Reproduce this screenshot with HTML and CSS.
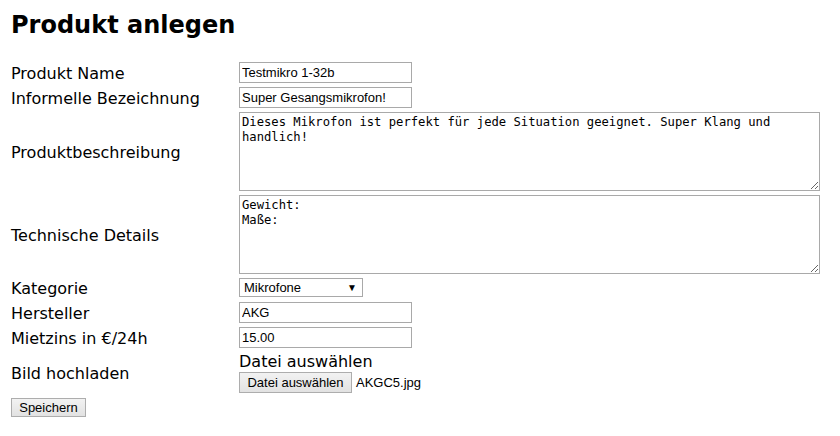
FILE: index.html
```html
<!DOCTYPE html>
<html lang="de">
<head>
<meta charset="utf-8">
<title>Produkt anlegen</title>
<link rel="stylesheet" href="styles.css">
</head>
<body>
<h1 class="title">Produkt anlegen</h1>
<form class="form">
  <div class="grid">
    <label class="lbl" for="name">Produkt Name</label>
    <div class="cell"><input id="name" class="txt" type="text" value="Testmikro 1-32b"></div>

    <label class="lbl" for="info">Informelle Bezeichnung</label>
    <div class="cell"><input id="info" class="txt" type="text" value="Super Gesangsmikrofon!"></div>

    <label class="lbl" for="desc">Produktbeschreibung</label>
    <div class="cell"><textarea id="desc" class="area">Dieses Mikrofon ist perfekt für jede Situation geeignet. Super Klang und handlich!</textarea></div>

    <label class="lbl" for="tech">Technische Details</label>
    <div class="cell"><textarea id="tech" class="area">Gewicht:
Maße:</textarea></div>

    <label class="lbl">Kategorie</label>
    <div class="cell"><div class="select"><span class="sel-text">Mikrofone</span><span class="sel-arrow">▼</span></div></div>

    <label class="lbl" for="herst">Hersteller</label>
    <div class="cell"><input id="herst" class="txt" type="text" value="AKG"></div>

    <label class="lbl" for="preis">Mietzins in €/24h</label>
    <div class="cell"><input id="preis" class="txt" type="text" value="15.00"></div>

    <label class="lbl">Bild hochladen</label>
    <div class="cell file">
      <div class="file-caption">Datei auswählen</div>
      <div class="file-row"><button type="button" class="btn btn-file">Datei auswählen</button><span class="file-name">AKGC5.jpg</span></div>
    </div>
  </div>
  <button type="button" class="btn btn-save">Speichern</button>
</form>
</body>
</html>
```

FILE: styles.css
```css
html, body {
  background: #ffffff;
}
body {
  margin: 8px;
  font-family: "DejaVu Sans", Verdana, sans-serif;
  color: #000;
}
.title {
  margin: 3px 0 23px 3px;
  font-size: 24px;
  line-height: 28px;
  font-weight: bold;
}
.form {
  margin: 0;
}
.grid {
  display: grid;
  grid-template-columns: 228px 581px;
  row-gap: 4px;
  padding-left: 3px;
}
.lbl {
  align-self: center;
  font-size: 16px;
  line-height: 19px;
  padding-top: 1px;
}
.cell {
  display: flex;
  align-items: flex-start;
}
.txt {
  box-sizing: border-box;
  width: 173px;
  height: 21px;
  margin: 0;
  padding: 1px 2px;
  border: 1px solid #a9a9a9;
  font-family: "Liberation Sans", Arial, sans-serif;
  font-size: 13px;
  color: #000;
  background: #fff;
}
.area {
  box-sizing: border-box;
  width: 581px;
  height: 79px;
  margin: 0;
  padding: 2px 2px;
  border: 1px solid #a9a9a9;
  font-family: "DejaVu Sans Mono", "Liberation Mono", monospace;
  font-size: 12.2px;
  line-height: 15px;
  color: #000;
  resize: vertical;
}
.select {
  box-sizing: border-box;
  width: 124px;
  height: 19px;
  border: 1px solid #a9a9a9;
  display: flex;
  align-items: center;
  justify-content: space-between;
  padding: 0 5px 0 4px;
  font-family: "Liberation Sans", Arial, sans-serif;
  font-size: 13px;
  background: #fff;
}
.sel-arrow {
  font-size: 10px;
}
.file {
  flex-direction: column;
}
.file-caption {
  font-size: 16px;
  line-height: 19px;
  margin-bottom: 1px;
}
.file-row {
  display: flex;
  align-items: center;
  gap: 4px;
}
.file-name {
  font-family: "Liberation Sans", Arial, sans-serif;
  font-size: 13px;
}
.btn {
  box-sizing: border-box;
  margin: 0;
  border: 1px solid #adadad;
  border-radius: 0;
  background: linear-gradient(#f2f2f2, #e2e2e2);
  font-family: "Liberation Sans", Arial, sans-serif;
  font-size: 13px;
  color: #000;
  padding: 0 6px;
}
.btn-file {
  width: 113px;
  height: 21px;
}
.btn-save {
  width: 75px;
  height: 19px;
  margin: 5px 0 0 3px;
}
```
